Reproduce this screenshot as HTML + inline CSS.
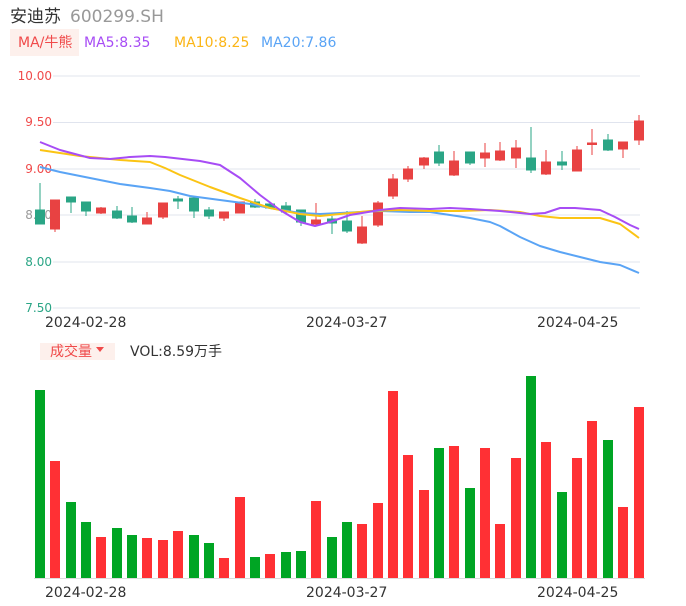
<!DOCTYPE html>
<html><head><meta charset="utf-8"><style>
body{margin:0;width:686px;height:606px;background:#fff;overflow:hidden;font-family:"Liberation Sans","Noto Sans CJK SC",sans-serif}
</style></head><body>
<svg width="686" height="606" xmlns="http://www.w3.org/2000/svg" style="position:absolute;left:0;top:0" font-family="DejaVu Sans, 'Noto Sans CJK SC', sans-serif">
<text x="10" y="22" font-size="17" fill="#333" font-family="'Noto Sans CJK SC',sans-serif">安迪苏</text>
<text x="70" y="22" font-size="17" fill="#999">600299.SH</text>
<rect x="10" y="29" width="69" height="27" fill="#fdf0ec"/>
<text x="18" y="47" font-size="14" fill="#f04a4a">MA/牛熊</text>
<text x="84" y="47" font-size="14" fill="#a74cf5">MA5:8.35</text>
<text x="174" y="47" font-size="14" fill="#fbb516">MA10:8.25</text>
<text x="261" y="47" font-size="14" fill="#5aa4f5">MA20:7.86</text>
<g stroke="#e0e4ee" stroke-width="1">
<line x1="53" y1="76" x2="640" y2="76"/><line x1="53" y1="122.5" x2="640" y2="122.5"/><line x1="53" y1="169" x2="640" y2="169"/><line x1="53" y1="215" x2="640" y2="215"/><line x1="53" y1="262" x2="640" y2="262"/><line x1="53" y1="308" x2="640" y2="308"/>
</g>
<g font-size="12" text-anchor="end">
<text x="52" y="80" fill="#f04a4a">10.00</text><text x="52" y="126" fill="#f04a4a">9.50</text><text x="52" y="173" fill="#f04a4a">9.00</text><text x="52" y="219" fill="#999">8.50</text><text x="52" y="266" fill="#2aa585">8.00</text><text x="52" y="312" fill="#2aa585">7.50</text>
</g>
<g stroke-width="1">
<g fill="#2aa585" stroke="#2aa585">
<line x1="40" y1="183" x2="40" y2="224"/><rect x="35.5" y="210" width="9" height="14"/>
<line x1="71" y1="197" x2="71" y2="213"/><rect x="66.5" y="197" width="9" height="5"/>
<line x1="86" y1="202" x2="86" y2="216"/><rect x="81.5" y="202" width="9" height="9"/>
<line x1="117" y1="206" x2="117" y2="219"/><rect x="112.5" y="211" width="9" height="7"/>
<line x1="132" y1="207" x2="132" y2="223"/><rect x="127.5" y="216" width="9" height="6"/>
<line x1="178" y1="196" x2="178" y2="209"/><rect x="173.5" y="199" width="9" height="2"/>
<line x1="194" y1="198" x2="194" y2="218"/><rect x="189.5" y="198" width="9" height="13"/>
<line x1="209" y1="207" x2="209" y2="219"/><rect x="204.5" y="210" width="9" height="6"/>
<line x1="255" y1="199" x2="255" y2="208"/><rect x="250.5" y="202" width="9" height="5"/>
<line x1="270" y1="202" x2="270" y2="208"/><rect x="265.5" y="204" width="9" height="4"/>
<line x1="286" y1="202" x2="286" y2="214"/><rect x="281.5" y="206" width="9" height="6"/>
<line x1="301" y1="210" x2="301" y2="226"/><rect x="296.5" y="210" width="9" height="12"/>
<line x1="332" y1="216" x2="332" y2="234"/><rect x="327.5" y="219" width="9" height="4"/>
<line x1="347" y1="211" x2="347" y2="233"/><rect x="342.5" y="221" width="9" height="10"/>
<line x1="439" y1="145" x2="439" y2="166"/><rect x="434.5" y="152" width="9" height="11"/>
<line x1="470" y1="152" x2="470" y2="165"/><rect x="465.5" y="152" width="9" height="11"/>
<line x1="531" y1="127" x2="531" y2="173"/><rect x="526.5" y="158" width="9" height="12"/>
<line x1="562" y1="151" x2="562" y2="170"/><rect x="557.5" y="162" width="9" height="3"/>
<line x1="608" y1="134" x2="608" y2="151"/><rect x="603.5" y="140" width="9" height="10"/>
</g>
<g fill="#e84242" stroke="#e84242">
<line x1="55" y1="200" x2="55" y2="232"/><rect x="50.5" y="200" width="9" height="29"/>
<line x1="101" y1="207" x2="101" y2="214"/><rect x="96.5" y="208" width="9" height="5"/>
<line x1="147" y1="212" x2="147" y2="224"/><rect x="142.5" y="218" width="9" height="6"/>
<line x1="163" y1="203" x2="163" y2="219"/><rect x="158.5" y="203" width="9" height="14"/>
<line x1="224" y1="212" x2="224" y2="221"/><rect x="219.5" y="212" width="9" height="6"/>
<line x1="240" y1="202" x2="240" y2="213"/><rect x="235.5" y="202" width="9" height="11"/>
<line x1="316" y1="203" x2="316" y2="226"/><rect x="311.5" y="220" width="9" height="4"/>
<line x1="362" y1="216" x2="362" y2="244"/><rect x="357.5" y="227" width="9" height="16"/>
<line x1="378" y1="201" x2="378" y2="227"/><rect x="373.5" y="203" width="9" height="22"/>
<line x1="393" y1="174" x2="393" y2="199"/><rect x="388.5" y="179" width="9" height="17"/>
<line x1="408" y1="166" x2="408" y2="182"/><rect x="403.5" y="169" width="9" height="10"/>
<line x1="424" y1="157" x2="424" y2="169"/><rect x="419.5" y="158" width="9" height="7"/>
<line x1="454" y1="151" x2="454" y2="176"/><rect x="449.5" y="161" width="9" height="14"/>
<line x1="485" y1="143" x2="485" y2="167"/><rect x="480.5" y="153" width="9" height="5"/>
<line x1="500" y1="142" x2="500" y2="161"/><rect x="495.5" y="151" width="9" height="9"/>
<line x1="516" y1="140" x2="516" y2="168"/><rect x="511.5" y="148" width="9" height="10"/>
<line x1="546" y1="150" x2="546" y2="175"/><rect x="541.5" y="162" width="9" height="12"/>
<line x1="577" y1="146" x2="577" y2="171"/><rect x="572.5" y="150" width="9" height="21"/>
<line x1="592" y1="129" x2="592" y2="155"/><rect x="587.5" y="143" width="9" height="1.5"/>
<line x1="623" y1="142" x2="623" y2="158"/><rect x="618.5" y="142" width="9" height="7"/>
<line x1="639" y1="115" x2="639" y2="145"/><rect x="634.5" y="121" width="9" height="19"/>
</g>
</g>
<g fill="none" stroke-width="2" stroke-linejoin="round">
<polyline stroke="#5aa4f5" points="40,167 60,172 90,178 120,184 150,188 170,191 190,196 220,200 250,204 270,208 300,213 320,214 340,213 360,212 380,211 410,212 430,212 450,215 470,218 490,222 500,226 520,237 540,246 560,252 580,257 600,262 620,265 639,273"/>
<polyline stroke="#fbc414" points="40,150 80,156 120,160 150,162 165,168 180,175 210,187 240,198 270,208 300,214 320,216 340,214 370,211 400,210 430,211 460,211 490,210 520,212 540,216 560,218 580,218 600,218 620,224 639,238"/>
<polyline stroke="#a74cf5" points="40,142 60,150 90,158 110,159 130,157 150,156 165,157 200,161 220,165 240,178 260,195 280,210 300,222 315,226 330,222 350,215 380,210 400,208 430,209 450,208 470,209 500,211 530,214 545,213 560,208 575,208 600,210 615,217 630,225 639,229"/>
</g>
<g font-size="14" fill="#333">
<text x="45" y="327">2024-02-28</text><text x="306" y="327">2024-03-27</text><text x="537" y="327">2024-04-25</text>
<text x="45" y="597">2024-02-28</text><text x="306" y="597">2024-03-27</text><text x="537" y="597">2024-04-25</text>
</g>
<rect x="40" y="343" width="75" height="17" fill="#fdf0ec"/>
<text x="50" y="356" font-size="14" fill="#f04a4a" font-family="'Noto Sans CJK SC',sans-serif">成交量</text>
<path d="M96 347 L104 347 L100 352 Z" fill="#f04a4a"/>
<text x="130" y="356" font-size="14" fill="#333">VOL:8.59<tspan font-family="'Noto Sans CJK SC',sans-serif">万手</tspan></text>
<line x1="34" y1="578.5" x2="645" y2="578.5" stroke="#ddd"/>
<g fill="#00a524">
<rect x="35" y="390" width="10" height="188"/>
<rect x="66" y="502" width="10" height="76"/><rect x="81" y="522" width="10" height="56"/>
<rect x="112" y="528" width="10" height="50"/><rect x="127" y="535" width="10" height="43"/>
<rect x="189" y="535" width="10" height="43"/><rect x="204" y="543" width="10" height="35"/>
<rect x="250" y="557" width="10" height="21"/><rect x="281" y="552" width="10" height="26"/><rect x="296" y="551" width="10" height="27"/>
<rect x="327" y="537" width="10" height="41"/><rect x="342" y="522" width="10" height="56"/>
<rect x="434" y="448" width="10" height="130"/><rect x="465" y="488" width="10" height="90"/>
<rect x="526" y="376" width="10" height="202"/><rect x="557" y="492" width="10" height="86"/><rect x="603" y="440" width="10" height="138"/>
</g>
<g fill="#ff3034">
<rect x="50" y="461" width="10" height="117"/><rect x="96" y="537" width="10" height="41"/>
<rect x="142" y="538" width="10" height="40"/><rect x="158" y="540" width="10" height="38"/><rect x="173" y="531" width="10" height="47"/>
<rect x="219" y="558" width="10" height="20"/><rect x="235" y="497" width="10" height="81"/><rect x="265" y="554" width="10" height="24"/>
<rect x="311" y="501" width="10" height="77"/><rect x="357" y="524" width="10" height="54"/><rect x="373" y="503" width="10" height="75"/>
<rect x="388" y="391" width="10" height="187"/><rect x="403" y="455" width="10" height="123"/><rect x="419" y="490" width="10" height="88"/>
<rect x="449" y="446" width="10" height="132"/><rect x="480" y="448" width="10" height="130"/><rect x="495" y="524" width="10" height="54"/>
<rect x="511" y="458" width="10" height="120"/><rect x="541" y="442" width="10" height="136"/><rect x="572" y="458" width="10" height="120"/>
<rect x="587" y="421" width="10" height="157"/><rect x="618" y="507" width="10" height="71"/><rect x="634" y="407" width="10" height="171"/>
</g>
</svg>
</body></html>
